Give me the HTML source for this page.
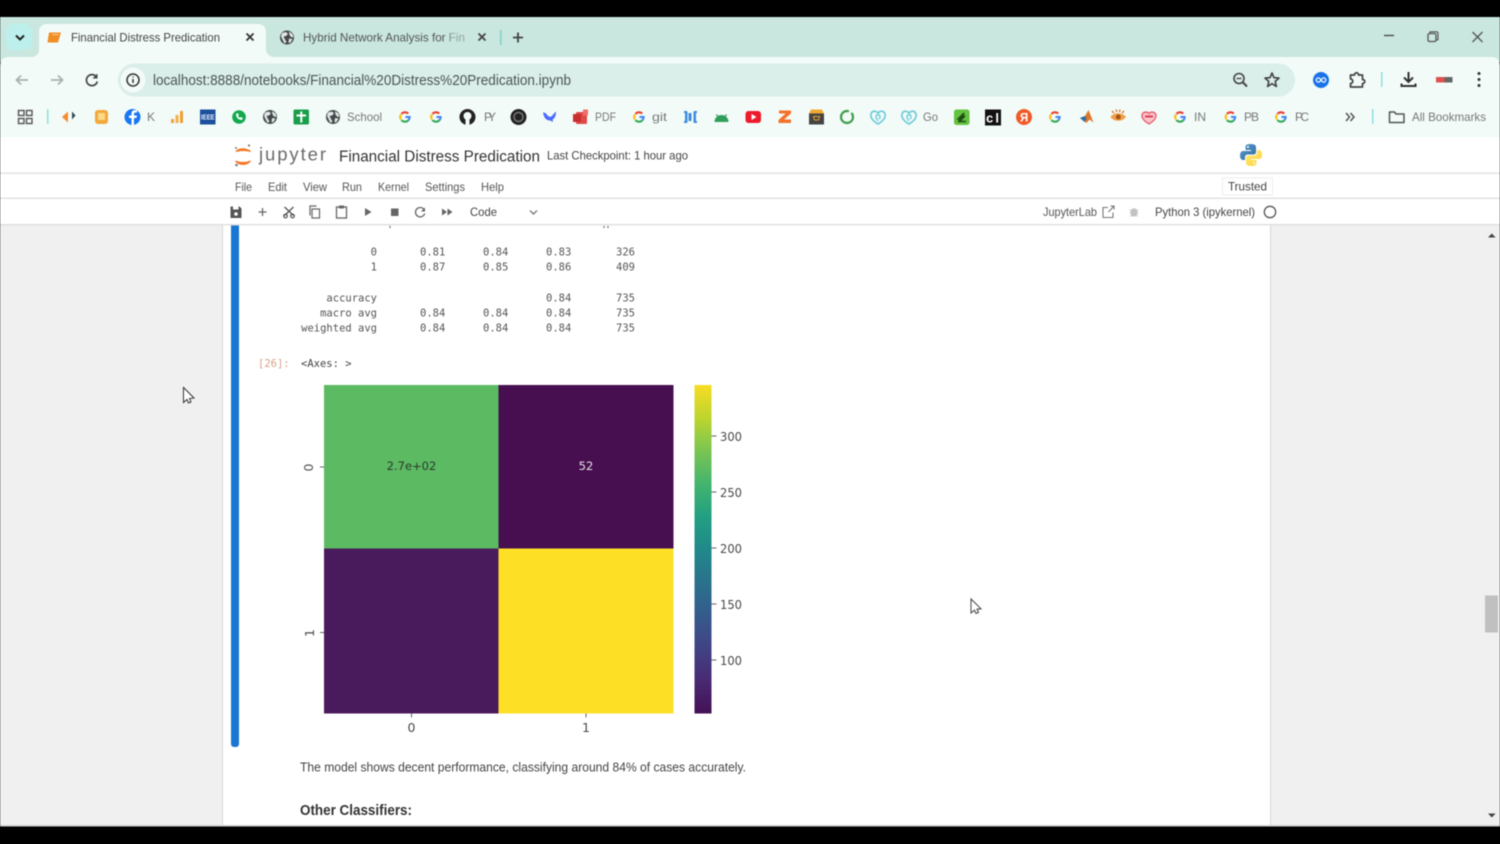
<!DOCTYPE html>
<html lang="en">
<head>
<meta charset="utf-8">
<title>Financial Distress Predication</title>
<style>
html,body{margin:0;padding:0;background:#000;width:1500px;height:844px;overflow:hidden}
svg{display:block;filter:blur(.45px)}
text{font-family:"Liberation Sans",sans-serif}
.m text{font-family:"DejaVu Sans Mono","Liberation Mono",monospace;font-size:10.5px;fill:#555}
.bm{font-size:12px;fill:#777}
.menu{font-size:12px;fill:#555}
.cb{font-size:12.5px;fill:#4a4a4a;font-family:"DejaVu Sans","Liberation Sans",sans-serif}
</style>
</head>
<body>
<svg width="1500" height="844" viewBox="0 0 1500 844" xmlns="http://www.w3.org/2000/svg">
<defs>
<linearGradient id="vir" x1="0" y1="0" x2="0" y2="1">
<stop offset="0" stop-color="#f8dc24"/><stop offset=".1" stop-color="#bdd52e"/><stop offset=".2" stop-color="#7ac552"/>
<stop offset=".3" stop-color="#44b46e"/><stop offset=".4" stop-color="#22a082"/><stop offset=".5" stop-color="#21898a"/>
<stop offset=".6" stop-color="#2a728c"/><stop offset=".7" stop-color="#355b8c"/><stop offset=".8" stop-color="#414385"/>
<stop offset=".9" stop-color="#482a72"/><stop offset="1" stop-color="#451055"/>
</linearGradient>
<linearGradient id="py1" x1="0" y1="0" x2="1" y2="1"><stop offset="0" stop-color="#5a9fd4"/><stop offset="1" stop-color="#306998"/></linearGradient>
<linearGradient id="py2" x1="0" y1="0" x2="1" y2="1"><stop offset="0" stop-color="#ffe873"/><stop offset="1" stop-color="#ffd43b"/></linearGradient>
<symbol id="g" viewBox="-7 -7 14 14" overflow="visible">
<g fill="none" stroke-width="2.2">
<path d="M-3.9 -3.2A5 5 0 0 1 3.5 -3.6" stroke="#ea4335"/>
<path d="M-4.4 -2.6A5 5 0 0 0 -4.4 2.6" stroke="#fbbc05"/>
<path d="M-3.9 3.2A5 5 0 0 0 3.6 3.5" stroke="#34a853"/>
<path d="M3.6 3.5A5 5 0 0 0 5 0H.5" stroke="#4285f4"/>
</g>
</symbol>
<symbol id="globe" viewBox="-8 -8 16 16" overflow="visible">
<circle r="7" fill="#44484c"/>
<path d="M-5 -4.500L-1 -5.500 1 -3.500-1 -1.500-3.500-1-2 2-.5 4.500-2.500 6-4.500 2-6-1ZM2-6L5.500-3.500 6.500 0 4-.5 2.500-2.500ZM2 1L5.500 1.500 3.500 5 1.500 5.500Z" fill="#dfe6e4"/>
</symbol>
<symbol id="swirl" viewBox="-9 -9 18 18" overflow="visible">
<path d="M0 7C-5 4-8 1-7-3-6-6-3-7 0-4 3-7 6-6 7-3 8 1 5 4 0 7Z" fill="none" stroke="#6fcbdc" stroke-width="1.700"/>
<path d="M0 4C-2 1-3-1-1-2 2-3 3 0 1 2" fill="none" stroke="#6fcbdc" stroke-width="1.400"/>
</symbol>
</defs>

<!-- frame -->
<rect width="1500" height="844" fill="#000"/>
<!-- tab strip -->
<rect x="0" y="17" width="1500" height="45" fill="#c9e6df"/>
<rect x="6" y="24" width="26" height="26" rx="8" fill="#bdf0ed"/>
<path d="M16 35.500l4 4 4-4" fill="none" stroke="#222" stroke-width="2"/>
<!-- active tab -->
<path d="M31 57C36 57 39 54 39 49V32C39 27 42 24 47 24H258C263 24 266 27 266 32V49C266 54 270 57 275 57Z" fill="#f2fbf8"/>
<path d="M49 32.500H61L58 42.500H47.500Z" fill="#f08d24"/><path d="M52 34.500H59" stroke="#ffc98a" stroke-width="1"/>
<text x="71" y="41.500" font-size="12" textLength="149" lengthAdjust="spacingAndGlyphs" fill="#444">Financial Distress Predication</text>
<path d="M246.500 33.500l7 7m0-7l-7 7" stroke="#333" stroke-width="1.800" fill="none"/>
<use href="#globe" x="279" y="29.500" width="16" height="16"/>
<text x="303" y="41.500" font-size="12" textLength="162" lengthAdjust="spacingAndGlyphs" fill="#555">Hybrid Network Analysis for Fin</text>
<rect x="450" y="28" width="16" height="18" fill="#c9e6df" opacity=".55"/>
<path d="M478.500 33.500l7 7m0-7l-7 7" stroke="#444" stroke-width="1.800" fill="none"/>
<rect x="500" y="30" width="1.500" height="15" fill="#7fd0ca"/>
<path d="M518 32.500v10M513 37.500h10" stroke="#444" stroke-width="1.800" fill="none"/>
<!-- window controls -->
<path d="M1384 35.500h10" stroke="#444" stroke-width="1.300"/>
<rect x="1428" y="33.500" width="8" height="8" rx="1.500" fill="none" stroke="#555" stroke-width="1.300"/>
<path d="M1430 33v-1.200h6.500a1.500 1.500 0 0 1 1.500 1.500v6.500h-1.500" fill="none" stroke="#555" stroke-width="1.100"/>
<path d="M1472.500 32l10 10m0-10l-10 10" stroke="#555" stroke-width="1.300"/>

<!-- toolbar -->
<path d="M0 66C0 60 3 57 9 57H1491C1497 57 1500 60 1500 66V137H0Z" fill="#f2fbf8"/>
<path d="M28 80H16.500m4.500-4.500l-4.500 4.500 4.500 4.500" fill="none" stroke="#a9b0ae" stroke-width="1.700"/>
<path d="M51 80H62.500m-4.500-4.500l4.500 4.500-4.500 4.500" fill="none" stroke="#a9b0ae" stroke-width="1.700"/>
<path d="M96.500 77A5.500 5.500 0 1 0 97.300 81.500" fill="none" stroke="#444" stroke-width="1.700"/><path d="M97.500 73.500v5h-5z" fill="#444"/>
<rect x="118" y="63.500" width="1177" height="33" rx="16.500" fill="#daeeea"/>
<circle cx="133" cy="80" r="12.500" fill="#f2fbf8"/>
<circle cx="133" cy="80" r="6" fill="none" stroke="#333" stroke-width="1.500"/><path d="M133 79v4M133 76.500v1" stroke="#333" stroke-width="1.500"/>
<text x="153" y="85" font-size="14.500" textLength="418" lengthAdjust="spacingAndGlyphs" fill="#4c5654">localhost:8888/notebooks/Financial%20Distress%20Predication.ipynb</text>
<circle cx="1239" cy="78.500" r="5" fill="none" stroke="#444" stroke-width="1.600"/><path d="M1243 82.500l4 4" stroke="#444" stroke-width="2"/><path d="M1236.500 78.500h5" stroke="#444" stroke-width="1.300"/>
<path d="M1272 73l2 4.700 5 .4-3.800 3.300 1.200 5-4.400-2.700-4.400 2.700 1.200-5-3.800-3.300 5-.4z" fill="none" stroke="#444" stroke-width="1.600" stroke-linejoin="round"/>
<circle cx="1321" cy="80" r="8" fill="#1a73e8"/><path d="M1318.500 77.800a2.200 2.200 0 1 0 0 4.400c1.800 0 3.200-4.400 5-4.400a2.200 2.200 0 1 1 0 4.400c-1.800 0-3.200-4.400-5-4.400z" fill="none" stroke="#fff" stroke-width="1.200"/>
<path d="M1350.500 75h4c0-3 4-3 4 0h4v4.500c3 0 3 4 0 4v3.500h-12v-3.500c3 0 3-4.500 0-4.500z" fill="none" stroke="#444" stroke-width="1.700" stroke-linejoin="round"/>
<rect x="1381" y="72" width="1.500" height="15" fill="#8fe0dc"/>
<path d="M1408.500 72v10m-4.500-4.500l4.500 4.500 4.500-4.500" fill="none" stroke="#333" stroke-width="2"/><path d="M1401.500 83.500v2.500h14v-2.500" fill="none" stroke="#333" stroke-width="2"/>
<rect x="1436" y="77" width="8.500" height="5.500" fill="#e0504c"/><rect x="1444.500" y="77" width="8" height="5.500" fill="#666"/>
<circle cx="1479" cy="73.500" r="1.500" fill="#333"/><circle cx="1479" cy="79.500" r="1.500" fill="#333"/><circle cx="1479" cy="85.500" r="1.500" fill="#333"/>

<!-- bookmarks -->
<g fill="none" stroke="#555" stroke-width="1.400"><rect x="18.500" y="110.500" width="5.500" height="5"/><rect x="26.500" y="110.500" width="5.500" height="5"/><rect x="18.500" y="118.500" width="5.500" height="5"/><rect x="26.500" y="118.500" width="5.500" height="5"/></g>
<rect x="47" y="109" width="1.500" height="15" fill="#8fe0dc"/>
<path d="M68 111.500v11l-6-5.500z" fill="#f28b30"/><path d="M72 111.500l3.500 4-3.500 4z" fill="#2e4a56"/>
<rect x="95" y="110" width="13" height="14" rx="3" fill="#f2a93b"/><rect x="98" y="113" width="7" height="7" fill="#fcd889"/>
<circle cx="132.500" cy="117" r="8" fill="#1877f2"/><path d="M134 125v-7h2.500l.4-2.500H134v-1.500c0-1 .5-1.500 1.500-1.500h1.500v-2.200c-3-.5-5.500 0-5.500 3.200v2h-2.500v2.500h2.500v7z" fill="#fff"/>
<text x="147" y="121" class="bm" textLength="7">K</text>
<rect x="171" y="119" width="3" height="4" fill="#f2a03a"/><rect x="175.500" y="115" width="3" height="8" fill="#f2b04a"/><rect x="180" y="111" width="3" height="12" fill="#f0a030"/>
<rect x="200" y="109.500" width="15.500" height="15" fill="#1c4f9c"/><text x="201" y="119.500" font-size="7" fill="#e8eefa" font-weight="bold" textLength="13.500" lengthAdjust="spacingAndGlyphs">IEEE</text>
<circle cx="239" cy="117" r="6.800" fill="#12a84e"/><path d="M236 114c0 3.500 2.500 6 6 6l.8-2-2-1-.9.8c-1-.5-1.500-1.100-1.900-1.900l.8-.9-1-2z" fill="#fff"/>
<use href="#globe" x="262" y="109" width="16" height="16"/>
<rect x="293.500" y="109.500" width="15.500" height="15" rx="1.500" fill="#1b9e4b"/><path d="M301.300 111.500v11M296.500 115.500h9.500" stroke="#fff" stroke-width="2"/>
<use href="#globe" x="325" y="109" width="16" height="16"/>
<text x="347" y="121" class="bm" textLength="35" lengthAdjust="spacingAndGlyphs">School</text>
<use href="#g" x="398.500" y="110.500" width="13" height="13"/>
<use href="#g" x="429.500" y="110.500" width="13" height="13"/>
<circle cx="467.500" cy="117" r="8" fill="#222"/><circle cx="467.500" cy="116" r="4" fill="#f2fbf8"/><rect x="465.500" y="119" width="4" height="6" fill="#f2fbf8"/>
<text x="484" y="121" class="bm" textLength="12">PY</text>
<circle cx="518.500" cy="117" r="8" fill="#222"/><circle cx="518.500" cy="117" r="4.500" fill="none" stroke="#777" stroke-width="1.500"/>
<path d="M543 112.500c3-.5 4 3 6 4 2 1 3.500-1 4.500-2.500l2.500-2.500c0 5-1.500 7-3.500 8 .5 1 .5 2 0 2.500-1-.5-1.500-1-2-1.500-4 .5-7-3-7.500-8.500z" fill="#4d6bfe"/>
<rect x="576" y="112" width="11" height="12" rx="1" fill="#e04a4a"/><rect x="573" y="114" width="8" height="8" fill="#c9302c"/><rect x="583" y="109.500" width="5" height="6" fill="#ee6f6a"/>
<text x="595" y="121" class="bm" textLength="21" lengthAdjust="spacingAndGlyphs">PDF</text>
<use href="#g" x="632.500" y="110.500" width="13" height="13"/>
<text x="652" y="121" class="bm" textLength="15" lengthAdjust="spacingAndGlyphs">git</text>
<path d="M685 111.500h2.500v11H685zM693.500 111.500h2.500v11h-2.500zM688.500 113h3v8h-3z" fill="#3f8ee0"/><path d="M684 111h3v2h-3zM694 111h3v2h-3zM684 121h3v2h-3zM694 121h3v2h-3z" fill="#3f8ee0"/>
<path d="M714.500 122a7 7 0 0 1 14 0z" fill="#2f9e5b"/><path d="M716.500 114.500l1.800 2.500M726.500 114.500l-1.800 2.500" stroke="#2f9e5b" stroke-width="1.200"/>
<rect x="745.500" y="111" width="15.500" height="12" rx="3" fill="#ee1b2c"/><path d="M751.500 114v6l5-3z" fill="#fff"/>
<path d="M779 110.500h12v3l-7 6h7v3.500h-12.500v-3l7-6.500h-6.500z" fill="#f4712a"/>
<rect x="809" y="113.500" width="15" height="11" fill="#444"/><path d="M811 109.500h11l2 4h-15z" fill="#f0a92e"/><path d="M813.500 116.500h6l-1 3.500h-4z" fill="none" stroke="#e8a030" stroke-width="1"/>
<circle cx="847" cy="117" r="6" fill="none" stroke="#3f9f4a" stroke-width="2.200" stroke-dasharray="30 3"/>
<use href="#swirl" x="869" y="108" width="18" height="18"/>
<use href="#swirl" x="900" y="108" width="18" height="18"/>
<text x="923" y="121" class="bm" textLength="15" lengthAdjust="spacingAndGlyphs">Go</text>
<rect x="954" y="109.500" width="15.500" height="15.500" rx="2.500" fill="#63c23e"/><path d="M958 119l6-6-2 4 3-1-6 6 1-3zM958 121.500h8" stroke="#1f4d16" stroke-width="1.500" fill="#1f4d16"/>
<rect x="985" y="109.500" width="16" height="16" fill="#111"/><text x="986" y="122.500" font-size="13" font-weight="bold" fill="#fff" textLength="13">cl</text>
<circle cx="1024" cy="117" r="8" fill="#f05a28"/><text x="1020" y="121.500" font-size="11.500" font-weight="bold" fill="#fff">Я</text>
<use href="#g" x="1048.500" y="110.500" width="13" height="13"/>
<path d="M1080 118l5-2 3.500-6 5 12.500-4-3-3 3.500z" fill="#e0762a"/><path d="M1080 118l5-2 1.500 2.500-2 3.500z" fill="#2f6fa8"/>
<path d="M1110.500 117c3-5 12-5 15.500 0-3.500 5-12.500 5-15.500 0z" fill="#f0a04a"/><circle cx="1118.300" cy="117" r="2.500" fill="#a85214"/><path d="M1112 111l2 2M1116 109.500l1 2.500M1120 109.500l-.5 2.500M1124 111l-2 2" stroke="#d9752a" stroke-width="1.300"/>
<path d="M1149 124c-5-3-7.500-6-7-9 .5-3 5-4 7-1.500 2-2.500 6.500-1.500 7 1.500.5 3-2 6-7 9z" fill="#f9c5cc" stroke="#e85a6c" stroke-width="1.300"/><path d="M1145 116.500h8" stroke="#e03c55" stroke-width="2"/>
<use href="#g" x="1173.500" y="110.500" width="13" height="13"/>
<text x="1194" y="121" class="bm" textLength="12">IN</text>
<use href="#g" x="1224" y="110.500" width="13" height="13"/>
<text x="1244" y="121" class="bm" textLength="15">PB</text>
<use href="#g" x="1274.500" y="110.500" width="13" height="13"/>
<text x="1295" y="121" class="bm" textLength="14">PC</text>
<path d="M1346 113l3.500 4-3.500 4M1350.500 113l3.500 4-3.500 4" fill="none" stroke="#555" stroke-width="1.500"/>
<rect x="1372" y="109" width="1.500" height="15" fill="#8fe0dc"/>
<path d="M1389.500 122.500v-10.500h5l1.500 2h8v8.500z" fill="none" stroke="#555" stroke-width="1.500" stroke-linejoin="round"/>
<text x="1412" y="121" class="bm" textLength="74" lengthAdjust="spacingAndGlyphs">All Bookmarks</text>

<!-- Jupyter area -->
<rect x="0" y="137" width="1500" height="88" fill="#fff"/>
<path d="M236 151.500c3-3.500 10-3.500 14.500 0-4-1.500-10.500-1.500-14.500 0zM235.500 161c4 4.500 11 4.500 15 0-4 2-11 2-15 0z" fill="#f37626" stroke="#f37626" stroke-width="1.200"/>
<circle cx="249" cy="145.500" r="1.100" fill="#777"/><circle cx="236" cy="148" r="1" fill="#777"/><circle cx="236.500" cy="165" r="1.300" fill="#777"/>
<text x="259" y="160.500" font-size="18.500" textLength="67" fill="#6a6b6b">jupyter</text>
<text x="339" y="161.500" font-size="15.500" textLength="201" lengthAdjust="spacingAndGlyphs" fill="#333">Financial Distress Predication</text>
<text x="547" y="159.500" font-size="12" textLength="141" lengthAdjust="spacingAndGlyphs" fill="#444">Last Checkpoint: 1 hour ago</text>
<g transform="translate(1240,144)">
<path d="M10.500 0C5.500 0 5.500 2 5.500 3V6H11V7H3C1 7 0 9 0 11.500S1 16 3 16H5V13C5 11.500 6.500 10.500 8 10.500H13C15 10.500 16 9.500 16 8V3C16 1 14 0 10.500 0Z" fill="url(#py1)"/>
<path d="M11.500 22C16.500 22 16.500 20 16.500 19V16H11V15H19C21 15 22 13 22 10.500S21 6 19 6H17V9C17 10.500 15.500 11.500 14 11.500H9C7 11.500 6 12.500 6 14V19C6 21 8 22 11.500 22Z" fill="url(#py2)"/>
<circle cx="8" cy="3" r="1" fill="#fff"/><circle cx="14" cy="19" r="1" fill="#fff"/>
</g>
<rect x="0" y="172.500" width="1500" height="1.500" fill="#e2e2e2"/>
<text class="menu" x="235" y="191" textLength="17" lengthAdjust="spacingAndGlyphs">File</text>
<text class="menu" x="268" y="191" textLength="19" lengthAdjust="spacingAndGlyphs">Edit</text>
<text class="menu" x="303" y="191" textLength="24" lengthAdjust="spacingAndGlyphs">View</text>
<text class="menu" x="342" y="191" textLength="20" lengthAdjust="spacingAndGlyphs">Run</text>
<text class="menu" x="378" y="191" textLength="31" lengthAdjust="spacingAndGlyphs">Kernel</text>
<text class="menu" x="425" y="191" textLength="40" lengthAdjust="spacingAndGlyphs">Settings</text>
<text class="menu" x="481" y="191" textLength="23" lengthAdjust="spacingAndGlyphs">Help</text>
<rect x="1222.500" y="178" width="50" height="17" fill="#fff" stroke="#eee"/>
<text x="1228" y="190.500" font-size="12" textLength="39" lengthAdjust="spacingAndGlyphs" fill="#444">Trusted</text>
<rect x="0" y="197.500" width="1500" height="1.500" fill="#e2e2e2"/>

<!-- notebook toolbar -->
<path d="M230.500 206.500h9l2 2v9.500h-11zM233 206.500v3h5.500v-3" fill="#555"/><circle cx="236" cy="214" r="1.800" fill="#fff"/>
<path d="M262.500 208v8M258.500 212h8" stroke="#666" stroke-width="1.300"/>
<path d="M284.500 207l9 8.500M293.500 207l-9 8.500" stroke="#555" stroke-width="1.300"/><circle cx="285.500" cy="216" r="1.800" fill="none" stroke="#555" stroke-width="1.200"/><circle cx="292.500" cy="216" r="1.800" fill="none" stroke="#555" stroke-width="1.200"/>
<rect x="312" y="209" width="7.500" height="9" fill="none" stroke="#666" stroke-width="1.200"/><path d="M310 215.500v-9.500h6.500" fill="none" stroke="#666" stroke-width="1.200"/>
<rect x="336.500" y="207" width="10" height="11" fill="none" stroke="#666" stroke-width="1.300"/><rect x="339" y="205.500" width="5" height="3" fill="#666"/>
<path d="M365 208l6.500 4-6.500 4z" fill="#666"/>
<rect x="391" y="208.500" width="7.500" height="7.500" fill="#666"/>
<path d="M424 209.500a4.700 4.700 0 1 0 .7 4" fill="none" stroke="#666" stroke-width="1.300"/><path d="M425 207.500v4h-4z" fill="#666"/>
<path d="M442 208.500l5 3.500-5 3.500zM447.500 208.500l5 3.500-5 3.500z" fill="#666"/>
<text x="470" y="216" font-size="12" textLength="27" lengthAdjust="spacingAndGlyphs" fill="#444">Code</text>
<path d="M530 210.500l3.500 3.500 3.500-3.500" fill="none" stroke="#666" stroke-width="1.200"/>
<text x="1043" y="216" font-size="12" textLength="54" lengthAdjust="spacingAndGlyphs" fill="#555">JupyterLab</text>
<path d="M1108 207.500h-5v10h10v-5M1108.500 212l5-5.500M1110.500 206h3.500v3.500" fill="none" stroke="#777" stroke-width="1.100"/>
<ellipse cx="1134" cy="212.500" rx="3.500" ry="4.200" fill="#bdbdbd"/><path d="M1129.500 210h9M1129.500 213h9M1130 216l8-.2" stroke="#ccc" stroke-width="1"/>
<text x="1155" y="216" font-size="12" textLength="100" lengthAdjust="spacingAndGlyphs" fill="#444">Python 3 (ipykernel)</text>
<circle cx="1270" cy="212" r="5.700" fill="none" stroke="#555" stroke-width="1.300"/>
<rect x="0" y="224" width="1500" height="1.500" fill="#e0e0e0"/>

<!-- content -->
<rect x="0" y="225.500" width="1500" height="600" fill="#f0f0f0"/>
<rect x="222" y="225.500" width="1049" height="600" fill="#fff"/>
<rect x="222" y="225.500" width="1" height="600" fill="#d8d8d8"/>
<rect x="1270" y="225.500" width="1" height="600" fill="#d8d8d8"/>
<path d="M231 225.500h8V744a3 3 0 0 1-3 3h-2a3 3 0 0 1-3-3z" fill="#1976d2"/>
<path d="M390 226v2M604 226v2M608 226v2" stroke="#555"/>

<!-- output table -->
<g class="m">
<text x="377" y="255.500" text-anchor="end">0</text><text x="420" y="255.500">0.81</text><text x="483" y="255.500">0.84</text><text x="546" y="255.500">0.83</text><text x="616" y="255.500">326</text>
<text x="377" y="270.500" text-anchor="end">1</text><text x="420" y="270.500">0.87</text><text x="483" y="270.500">0.85</text><text x="546" y="270.500">0.86</text><text x="616" y="270.500">409</text>
<text x="377" y="301.500" text-anchor="end">accuracy</text><text x="546" y="301.500">0.84</text><text x="616" y="301.500">735</text>
<text x="377" y="316.500" text-anchor="end">macro avg</text><text x="420" y="316.500">0.84</text><text x="483" y="316.500">0.84</text><text x="546" y="316.500">0.84</text><text x="616" y="316.500">735</text>
<text x="377" y="331.500" text-anchor="end">weighted avg</text><text x="420" y="331.500">0.84</text><text x="483" y="331.500">0.84</text><text x="546" y="331.500">0.84</text><text x="616" y="331.500">735</text>
<text x="258" y="367" style="fill:#d6a184">[26]:</text>
<text x="301" y="367" style="fill:#444">&lt;Axes: &gt;</text>
</g>

<!-- heatmap -->
<rect x="324" y="385" width="174.500" height="163.500" fill="#5bba62"/>
<rect x="498.500" y="385" width="175" height="163.500" fill="#470f50"/>
<rect x="324" y="548.500" width="174.500" height="165" fill="#4a1b5c"/>
<rect x="498.500" y="548.500" width="175" height="165" fill="#fde026"/>
<text x="411.500" y="470" text-anchor="middle" font-size="11.500" style="font-family:'DejaVu Sans',sans-serif;fill:#2d3a2d">2.7e+02</text>
<text x="586" y="470" text-anchor="middle" font-size="11.500" style="font-family:'DejaVu Sans',sans-serif;fill:#e5e0e8">52</text>
<path d="M320 467h4M320 632.500h4M411.500 713.500v4M586 713.500v4" stroke="#666" stroke-width="1"/>
<text class="cb" transform="translate(313,467.500) rotate(-90)" text-anchor="middle">0</text>
<text class="cb" transform="translate(314,633) rotate(-90)" text-anchor="middle">1</text>
<text class="cb" x="411.500" y="732" text-anchor="middle">0</text>
<text class="cb" x="586" y="732" text-anchor="middle">1</text>
<rect x="694.500" y="385" width="17" height="328.500" fill="url(#vir)"/>
<path d="M711.500 436h5M711.500 492h5M711.500 548h5M711.500 604h5M711.500 660h5" stroke="#666" stroke-width="1"/>
<text class="cb" x="720" y="441" textLength="22" lengthAdjust="spacingAndGlyphs">300</text><text class="cb" x="720" y="497" textLength="22" lengthAdjust="spacingAndGlyphs">250</text><text class="cb" x="720" y="553" textLength="22" lengthAdjust="spacingAndGlyphs">200</text><text class="cb" x="720" y="609" textLength="22" lengthAdjust="spacingAndGlyphs">150</text><text class="cb" x="720" y="665" textLength="22" lengthAdjust="spacingAndGlyphs">100</text>

<text x="300" y="771.500" font-size="13" textLength="446" lengthAdjust="spacingAndGlyphs" fill="#444">The model shows decent performance, classifying around 84% of cases accurately.</text>
<text x="300" y="815" font-size="14.500" font-weight="bold" textLength="112" lengthAdjust="spacingAndGlyphs" fill="#333">Other Classifiers:</text>

<!-- scrollbar -->
<rect x="1485" y="595.500" width="13" height="37" fill="#c0c0c0"/>
<path d="M1488 237.500l3.800-4 3.800 4z" fill="#444"/>
<path d="M1488 813.500l3.800 4 3.800-4z" fill="#444"/>

<!-- cursors -->
<path d="M183.500 387.500v15l3.500-3 1.500 3.500 2.500-1-1.500-3.500 4.500-.5z" fill="#fff" stroke="#333" stroke-width="1"/>
<path d="M971 599v14l3.500-2.800 1.500 3.300 2.500-1-1.500-3.300 4-.4z" fill="#fff" stroke="#444" stroke-width="1"/>

<!-- bottom edge -->
<rect x="0" y="825" width="1500" height="1.500" fill="#cfcfcf"/>
<rect x="0" y="826.500" width="1500" height="18" fill="#000"/>
</svg>
</body>
</html>
